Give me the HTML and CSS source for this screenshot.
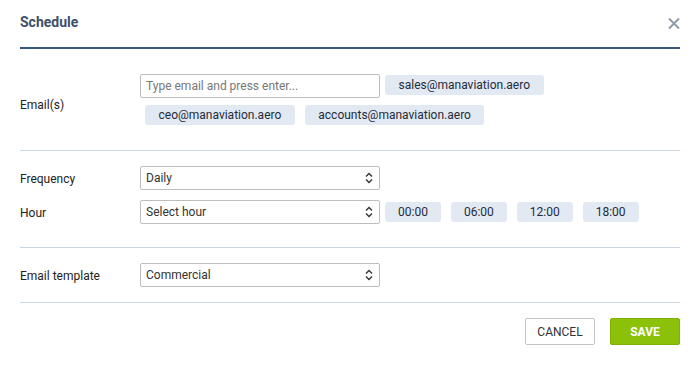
FILE: index.html
```html
<!DOCTYPE html>
<html>
<head>
<meta charset="utf-8">
<link rel="stylesheet" href="styles.css">
</head>
<body>
<div class="modal">
  <div class="header">
    <div class="title">Schedule</div>
    <svg class="close" width="12" height="11" viewBox="0 0 12 11"><path d="M1 0.5 L11 10.5 M11 0.5 L1 10.5" stroke="#8d9bab" stroke-width="2" fill="none"/></svg>
  </div>

  <div class="section emails">
    <div class="label email-label">Email(s)</div>
    <div class="email-box">
      <div class="input">Type email and press enter...</div>
      <span class="tag">sales@manaviation.aero</span>
      <span class="tag">ceo@manaviation.aero</span>
      <span class="tag">accounts@manaviation.aero</span>
    </div>
  </div>

  <div class="section freq">
    <div class="row">
      <div class="label">Frequency</div>
      <div class="controls">
        <div class="select">Daily<svg class="chev" width="8" height="12" viewBox="0 0 8 12"><path d="M1 4.5 L4 1.5 L7 4.5 M1 7.5 L4 10.5 L7 7.5" stroke="#333" stroke-width="1.4" fill="none"/></svg></div>
      </div>
    </div>
    <div class="row">
      <div class="label">Hour</div>
      <div class="controls">
        <div class="select">Select hour<svg class="chev" width="8" height="12" viewBox="0 0 8 12"><path d="M1 4.5 L4 1.5 L7 4.5 M1 7.5 L4 10.5 L7 7.5" stroke="#333" stroke-width="1.4" fill="none"/></svg></div>
        <span class="tag hour">00:00</span>
        <span class="tag hour">06:00</span>
        <span class="tag hour">12:00</span>
        <span class="tag hour">18:00</span>
      </div>
    </div>
  </div>

  <div class="section tmpl">
    <div class="row">
      <div class="label">Email template</div>
      <div class="controls">
        <div class="select">Commercial<svg class="chev" width="8" height="12" viewBox="0 0 8 12"><path d="M1 4.5 L4 1.5 L7 4.5 M1 7.5 L4 10.5 L7 7.5" stroke="#333" stroke-width="1.4" fill="none"/></svg></div>
      </div>
    </div>
  </div>

  <div class="footer">
    <button class="btn cancel">CANCEL</button>
    <button class="btn save">SAVE</button>
  </div>
</div>
</body>
</html>
```

FILE: styles.css
```css
* { box-sizing: border-box; }
body {
  margin: 0;
  background: #fff;
  font-family: Roboto, "Liberation Sans", sans-serif;
  font-size: 12px;
  color: #222;
}
.modal {
  padding: 0 20px;
  width: 700px;
}
.header {
  height: 49px;
  border-bottom: 2px solid #36577b;
  display: flex;
  align-items: flex-start;
  justify-content: space-between;
}
.title {
  font-size: 14px;
  font-weight: 700;
  color: #3e5068;
  margin-top: 14px;
  line-height: 16px;
}
.close {
  margin-top: 18px;
}
.section {
  border-bottom: 1px solid #cad6e4;
}
.emails {
  display: grid;
  grid-template-columns: 120px 1fr;
  align-items: center;
  padding: 25px 0 25px 0;
}
.email-label {
  padding-top: 10px;
}
.email-box {
  display: flex;
  flex-wrap: wrap;
  align-items: flex-start;
  row-gap: 6px;
}
.input {
  width: 240px;
  height: 24px;
  border: 1px solid #bdbdbd;
  border-radius: 2px;
  padding-left: 5px;
  line-height: 22px;
  color: #777;
}
.tag {
  display: inline-block;
  height: 20px;
  line-height: 20px;
  margin: 1px 5px 0 5px;
  padding: 0 13.5px;
  background: #e2e9f3;
  border-radius: 3px;
  color: #1e2b3b;
  white-space: nowrap;
}
.tag.hour {
  margin-top: 0;
  padding: 0 13px;
}
.freq {
  padding: 15px 0 13px 0;
}
.tmpl {
  padding: 15px 0 15px 0;
}
.freq .row {
  margin-bottom: 10px;
}
.row {
  display: grid;
  grid-template-columns: 120px 1fr;
  align-items: center;
}
.row .label {
  padding-top: 1px;
}
.controls {
  display: flex;
  align-items: center;
}
.select {
  width: 240px;
  height: 24px;
  border: 1px solid #bdbdbd;
  border-radius: 2px;
  padding: 0 6px 0 5px;
  line-height: 22px;
  color: #333;
  display: flex;
  align-items: center;
  justify-content: space-between;
}
.chev {
  flex: none;
}
.footer {
  display: flex;
  justify-content: flex-end;
  gap: 15px;
  padding-top: 15px;
}
.btn {
  height: 27px;
  width: 70px;
  font-family: Roboto, "Liberation Sans", sans-serif;
  font-size: 12px;
  border-radius: 2px;
  padding: 0;
  cursor: pointer;
}
.cancel {
  background: #fff;
  border: 1px solid #c4c4c4;
  color: #333;
}
.save {
  background: #8cc10a;
  border: 1px solid #7eb006;
  color: #fff;
  font-weight: 700;
}
```
